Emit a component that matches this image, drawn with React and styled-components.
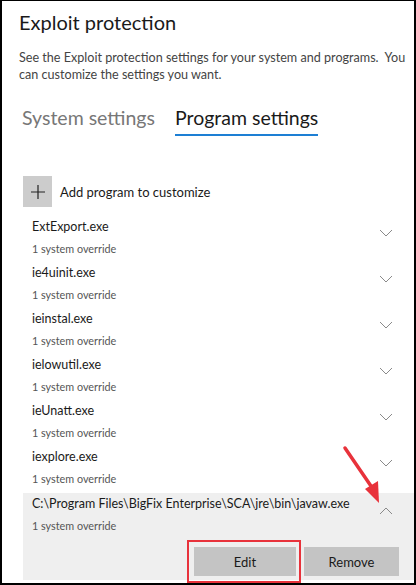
import React from "react"
import styled, { createGlobalStyle } from "styled-components"

const GlobalStyle = createGlobalStyle`
  html, body { margin: 0; padding: 0; background: #fff; }
  body { font-family: Lato, "Noto Sans", sans-serif; color: #1a1a1a; }
  * { box-sizing: border-box; }
`

const Frame = styled.div`
  position: relative;
  width: 416px;
  height: 585px;
  overflow: hidden;
  border-style: solid;
  border-color: #000;
  border-width: 1px 2px 2px 2px;
  background: #fff;
  padding: 6px 0 0 16px;
`

const Title = styled.h1`
  margin: 0 0 0 1px;
  font-size: 20px;
  font-weight: 400;
  line-height: 30px;
  color: #1a1a1a;
`

const Desc = styled.p`
  margin: 12px 0 0 1px;
  font-size: 12.6px;
  line-height: 17px;
  color: #444;
  width: 396px;
`

const Tabs = styled.div`
  display: flex;
  gap: 20px;
  margin: 22px 0 0 4px;
`

const Tab = styled.div`
  font-size: 19.5px;
  line-height: 26px;
  padding-bottom: 3px;
  color: ${p => (p.active ? "#1a1a1a" : "#777")};
  border-bottom: 2px solid ${p => (p.active ? "#1d7fd4" : "transparent")};
`

const AddRow = styled.div`
  display: flex;
  align-items: center;
  gap: 8px;
  margin: 40px 0 0 5px;
`

const AddIcon = styled.div`
  width: 29px;
  height: 31px;
  background: #cccccc;
  display: flex;
  align-items: center;
  justify-content: center;
`

const AddLabel = styled.span`
  font-size: 13px;
  color: #1a1a1a;
`

const List = styled.div`
  margin: 9px 0 0 5px;
  display: flex;
  flex-direction: column;
`

const Row = styled.div`
  display: grid;
  grid-template-columns: 1fr 40px;
  padding: 0 0 ${p => (p.open ? "4px" : "2px")} 9px;
  background: ${p => (p.open ? "#efefef" : "transparent")};
  margin-top: ${p => (p.open ? "1px" : "0")};
`

const Name = styled.div`
  font-size: 12.5px;
  line-height: 22px;
  color: #1a1a1a;
  white-space: nowrap;
`

const Sub = styled.div`
  font-size: 10.8px;
  line-height: 22px;
  color: #555;
`

const Chevron = styled.div`
  grid-row: 1 / span 2;
  grid-column: 2;
  padding: ${p => (p.open ? "14px" : "13px")} 0 0 5px;
  svg { display: block; }
`

const Actions = styled.div`
  grid-column: 1 / span 2;
  display: flex;
  gap: 8px;
  margin: 10px 0 0 162px;
`

const Button = styled.button`
  border: 0;
  background: #c4c4c4;
  height: 29px;
  width: ${p => p.w}px;
  font-family: inherit;
  font-size: 13px;
  color: #1a1a1a;
  padding: 0;
`

const Highlight = styled.div`
  position: absolute;
  left: 185px;
  top: 539px;
  width: 114px;
  height: 43px;
  border: 2.5px solid #e8323b;
  pointer-events: none;
`

const Arrow = styled.svg`
  position: absolute;
  left: 335px;
  top: 440px;
`

const programs = [
  "ExtExport.exe",
  "ie4uinit.exe",
  "ieinstal.exe",
  "ielowutil.exe",
  "ieUnatt.exe",
  "iexplore.exe",
]

const ChevronIcon = ({ up }) => (
  <svg width="14" height="8" viewBox="0 0 14 8">
    <path
      d={up ? "M1 7 L7 1 L13 7" : "M1 1 L7 7 L13 1"}
      fill="none"
      stroke="#8a8a8a"
      strokeWidth="1"
    />
  </svg>
)

const App = () => (
  <>
    <GlobalStyle />
    <Frame>
      <Title>Exploit protection</Title>
      <Desc>
        See the Exploit protection settings for your system and programs.&nbsp; You
        can customize the settings you want.
      </Desc>
      <Tabs>
        <Tab>System settings</Tab>
        <Tab active>Program settings</Tab>
      </Tabs>

      <AddRow>
        <AddIcon>
          <svg width="14" height="14" viewBox="0 0 14 14">
            <path d="M7 0 V14 M0 7 H14" stroke="#222" strokeWidth="1.2" />
          </svg>
        </AddIcon>
        <AddLabel>Add program to customize</AddLabel>
      </AddRow>

      <List>
        {programs.map(p => (
          <Row key={p}>
            <Name>{p}</Name>
            <Chevron><ChevronIcon /></Chevron>
            <Sub>1 system override</Sub>
          </Row>
        ))}
        <Row open>
          <Name>C:\Program Files\BigFix Enterprise\SCA\jre\bin\javaw.exe</Name>
          <Chevron open><ChevronIcon up /></Chevron>
          <Sub>1 system override</Sub>
          <Actions>
            <Button w={102}>Edit</Button>
            <Button w={95}>Remove</Button>
          </Actions>
        </Row>
        <Row>
          <Name>MsSense.exe</Name>
          <Chevron><ChevronIcon /></Chevron>
          <Sub>1 system override</Sub>
        </Row>
      </List>

      <Highlight />
      <Arrow width="60" height="70" viewBox="0 0 60 70">
        <line x1="8" y1="7" x2="36" y2="48" stroke="#e8323b" strokeWidth="3.5" strokeLinecap="round" />
        <polygon points="42,62 28,48 41,40" fill="#e8323b" />
      </Arrow>
    </Frame>
  </>
)

export default App
